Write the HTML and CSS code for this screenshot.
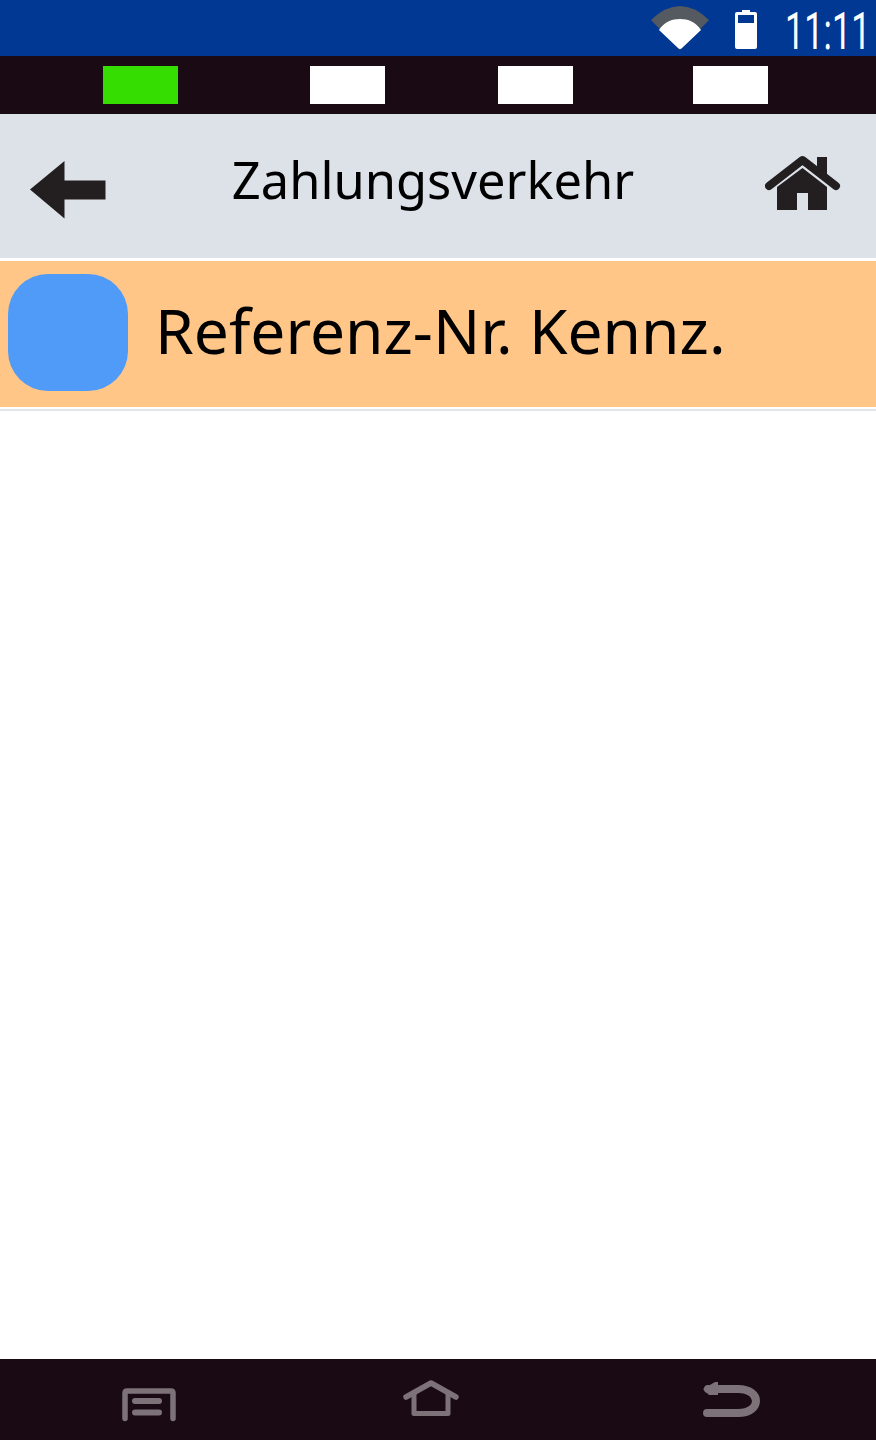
FILE: index.html
```html
<!DOCTYPE html>
<html lang="de">
<head>
<meta charset="utf-8">
<title>Zahlungsverkehr</title>
<link rel="stylesheet" href="styles.css">
</head>
<body>
<div class="app">
  <div class="status">
    <svg class="wifi" width="60" height="46" viewBox="0 0 60 46">
      <path d="M1 15 Q30 -13 59 15 L30 45 Z" fill="#555a60"/>
      <path d="M9 25 C14 17 22 14 30 14 C38 14 46 17 51 25 L32 43 Q30 45 28 43 Z" fill="#fff"/>
    </svg>
    <svg class="battery" width="24" height="41" viewBox="0 0 24 41">
      <path d="M8 1 H16 V3 H21 Q23 3 23 5 V38 Q23 40 21 40 H3 Q1 40 1 38 V5 Q1 3 3 3 H8 Z" fill="#fff"/>
      <rect x="4" y="6" width="16" height="8" fill="#003893"/>
    </svg>
    <span class="time">11:11</span>
  </div>
  <div class="tabs">
    <span class="tab tab-active"></span>
    <span class="tab tab-2"></span>
    <span class="tab tab-3"></span>
    <span class="tab tab-4"></span>
  </div>
  <header class="header">
    <svg class="back" width="76" height="58" viewBox="0 0 76 58">
      <path d="M0 28.5 L34.500 0 V19.500 H75.500 V38.500 H34.500 V57.500 Z" fill="#231f20"/>
    </svg>
    <h1 class="title">Zahlungsverkehr</h1>
    <svg class="home" width="76" height="56" viewBox="0 0 76 56">
      <path d="M4 32 L37.500 6 L71 32" fill="none" stroke="#231f20" stroke-width="8" stroke-linecap="round" stroke-linejoin="round"/>
      <path d="M52 3 H62 V22 L52 14 Z" fill="#231f20"/>
      <path d="M37.500 14 L62 33 V56 H43 V39 H32 V56 H12 V33 Z" fill="#231f20"/>
    </svg>
  </header>
  <div class="row">
    <span class="square"></span>
    <span class="row-text">Referenz-Nr. Kennz.</span>
  </div>
  <main class="content"></main>
  <nav class="nav">
    <svg class="nav-menu" width="54" height="34" viewBox="0 0 54 34">
      <path d="M3 30.500 V5 Q3 3 5 3 H49 Q51 3 51 5 V30.500" fill="none" stroke="#7d7278" stroke-width="5.500" stroke-linecap="round" stroke-linejoin="round"/>
      <path d="M13 13 H37 M13 24.500 H37" fill="none" stroke="#7d7278" stroke-width="6" stroke-linecap="round"/>
    </svg>
    <svg class="nav-home" width="56" height="38" viewBox="0 0 56 38">
      <path d="M3 17 L28 3 L53 17" fill="none" stroke="#7d7278" stroke-width="5.500" stroke-linecap="round" stroke-linejoin="round"/>
      <path d="M11 14 V33.500 H45 V14" fill="none" stroke="#7d7278" stroke-width="5" stroke-linejoin="round"/>
    </svg>
    <svg class="nav-back" width="58" height="38" viewBox="0 0 58 38">
      <path d="M6 9 H36 C60 9 60 33 36 33 H5" fill="none" stroke="#7d7278" stroke-width="8" stroke-linecap="round"/>
      <path d="M1 9 L13 2 H16 V15 H7 Z" fill="#7d7278"/>
    </svg>
  </nav>
</div>
</body>
</html>
```
FILE: styles.css
```css
html, body {
  margin: 0;
  padding: 0;
  background: #fff;
}

.app {
  display: flex;
  flex-direction: column;
  width: 876px;
  height: 1440px;
  overflow: hidden;
  font-family: "Noto Sans", sans-serif;
  color: #000;
}

.status {
  display: flex;
  align-items: center;
  justify-content: flex-end;
  height: 56px;
  flex: none;
  box-sizing: border-box;
  padding-right: 6px;
  background: #003893;
}

.wifi {
  flex: none;
  margin-top: 0;
  margin-right: 24px;
}

.battery {
  flex: none;
  margin-top: 2px;
  margin-right: -17px;
}

.time {
  flex: none;
  color: #fff;
  font-family: Roboto, sans-serif;
  font-weight: 400;
  font-size: 52px;
  line-height: 56px;
  white-space: nowrap;
  transform: translateY(4px) scaleX(0.66);
  transform-origin: right center;
}

.tabs {
  display: flex;
  align-items: center;
  flex: none;
  height: 58px;
  box-sizing: border-box;
  padding: 0 0 0 103px;
  background: #1a0a14;
}

.tab {
  width: 75px;
  height: 38px;
  background: #fff;
}

.tab-active {
  background: #35de00;
}

.tab-2 {
  margin-left: 132px;
}

.tab-3 {
  margin-left: 113px;
}

.tab-4 {
  margin-left: 120px;
}

.header {
  display: flex;
  align-items: center;
  flex: none;
  height: 144px;
  box-sizing: border-box;
  padding: 0 35px 0 30px;
  background: #dde1e8;
}

.back {
  flex: none;
  margin-top: 7px;
}

.title {
  flex: 1;
  margin: 0 5px 12px 0;
  text-align: center;
  font-weight: 400;
  font-size: 50.6px;
  line-height: 60px;
  white-space: nowrap;
}

.home {
  flex: none;
  margin-bottom: 8px;
}

.row {
  display: flex;
  align-items: center;
  flex: none;
  height: 146px;
  box-sizing: border-box;
  margin-top: 3px;
  padding-left: 8px;
  background: #ffc688;
}

.square {
  flex: none;
  width: 120px;
  height: 117px;
  margin-bottom: 3px;
  border-radius: 40px;
  background: #4f9bf7;
}

.row-text {
  margin-left: 27px;
  margin-bottom: 8px;
  font-size: 62.3px;
  line-height: 76px;
  white-space: nowrap;
}

.content {
  flex: 1;
  margin-top: 2px;
  border-top: 2px solid #e2e5ec;
  background: #fff;
}

.nav {
  display: flex;
  align-items: center;
  flex: none;
  height: 81px;
  box-sizing: border-box;
  padding-left: 122px;
  background: #1a0a14;
}

.nav-menu {
  flex: none;
  margin-top: 10px;
}

.nav-home {
  flex: none;
  margin-left: 227px;
  margin-bottom: 1px;
}

.nav-back {
  flex: none;
  margin-left: 243px;
  margin-bottom: 1px;
}
```
